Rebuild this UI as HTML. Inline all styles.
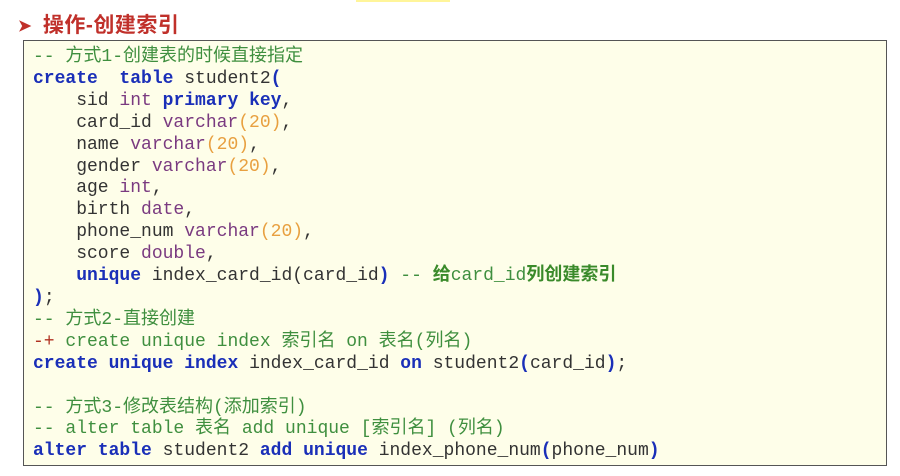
<!DOCTYPE html>
<html><head><meta charset="utf-8"><style>
body{margin:0;width:900px;height:476px;background:#fff;position:relative;overflow:hidden;font-family:"Liberation Sans","Noto Sans CJK SC",sans-serif}
.hl{position:absolute;left:356px;top:0;width:94px;height:2px;background:#fff59a}
.title{position:absolute;left:18px;top:9px;color:#c0302a;font-size:21px;font-weight:bold;letter-spacing:0.5px}
.title .ar{font-size:16px;margin-right:11px;position:relative;top:-1px}
.box{position:absolute;left:23px;top:40px;width:864px;height:426px;box-sizing:border-box;border:1px solid #555;background:#fefee9}
pre{margin:0;position:absolute;left:9px;top:6px;font-family:"Liberation Mono","Noto Sans CJK SC",monospace;font-size:18px;line-height:21.9px;color:#333}
.c{color:#3f8f3f}.k{color:#1a2fb8;font-weight:bold}.t{color:#7a3a80}.n{color:#e8a040}.b{color:#1a2fb8;font-weight:bold}
.cb{color:#3a8a2a;font-weight:bold}
.x{color:#b03020}
</style></head><body>
<div class="hl"></div>
<div class="title"><span class="ar">➤</span>操作-创建索引</div>
<div class="box"><pre><span class="c">-- 方式1-创建表的时候直接指定</span>
<span class="k">create</span>  <span class="k">table</span> student2<span class="b">(</span>
    sid <span class="t">int</span> <span class="k">primary</span> <span class="k">key</span>,
    card_id <span class="t">varchar</span><span class="n">(20)</span>,
    name <span class="t">varchar</span><span class="n">(20)</span>,
    gender <span class="t">varchar</span><span class="n">(20)</span>,
    age <span class="t">int</span>,
    birth <span class="t">date</span>,
    phone_num <span class="t">varchar</span><span class="n">(20)</span>,
    score <span class="t">double</span>,
    <span class="k">unique</span> index_card_id(card_id<span class="b">)</span> <span class="c">-- </span><span class="cb">给</span><span class="c">card_id</span><span class="cb">列创建索引</span>
<span class="b">)</span>;
<span class="c">-- 方式2-直接创建</span>
<span class="x">-+</span><span class="c"> create unique index 索引名 on 表名(列名)</span>
<span class="k">create</span> <span class="k">unique</span> <span class="k">index</span> index_card_id <span class="k">on</span> student2<span class="b">(</span>card_id<span class="b">)</span>;

<span class="c">-- 方式3-修改表结构(添加索引)</span>
<span class="c">-- alter table 表名 add unique [索引名] (列名)</span>
<span class="k">alter</span> <span class="k">table</span> student2 <span class="k">add</span> <span class="k">unique</span> index_phone_num<span class="b">(</span>phone_num<span class="b">)</span></pre></div>
</body></html>
